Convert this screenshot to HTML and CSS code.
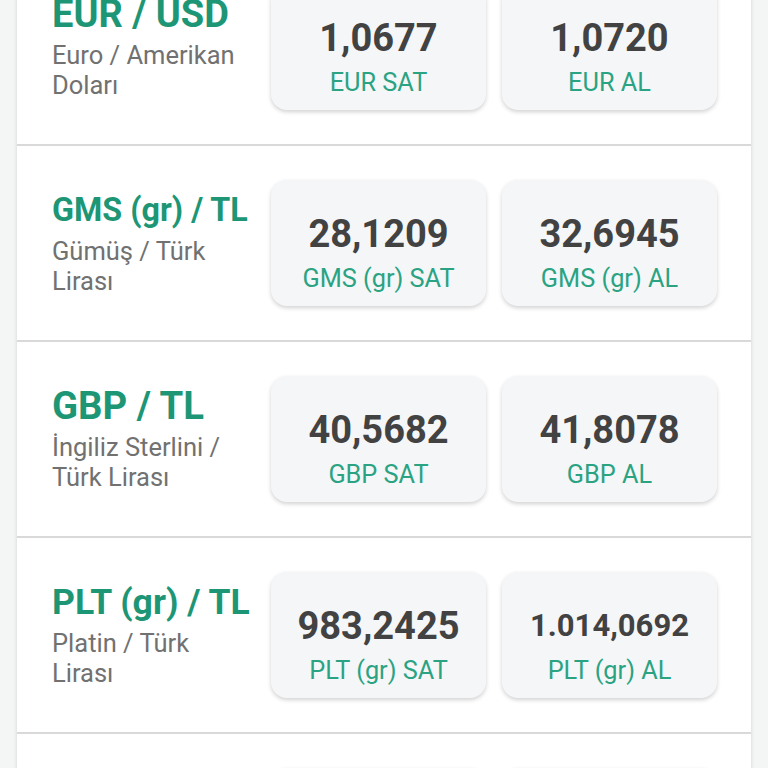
FILE: index.html
```html
<!DOCTYPE html>
<html lang="tr">
<head>
<meta charset="utf-8">
<title>Döviz Kurları</title>
<link rel="stylesheet" href="styles.css">
</head>
<body>
<main class="panel">
  <div class="list">
    <section class="row">
      <div class="info">
        <h2 class="title title--eur">EUR / USD</h2>
        <p class="subtitle">Euro / Amerikan Doları</p>
      </div>
      <div class="card"><span class="value">1,0677</span><span class="label">EUR SAT</span></div>
      <div class="card"><span class="value">1,0720</span><span class="label">EUR AL</span></div>
    </section>
    <section class="row">
      <div class="info">
        <h2 class="title title--gms">GMS (gr) / TL</h2>
        <p class="subtitle">Gümüş / Türk Lirası</p>
      </div>
      <div class="card"><span class="value">28,1209</span><span class="label">GMS (gr) SAT</span></div>
      <div class="card"><span class="value">32,6945</span><span class="label">GMS (gr) AL</span></div>
    </section>
    <section class="row">
      <div class="info">
        <h2 class="title title--gbp">GBP / TL</h2>
        <p class="subtitle">İngiliz Sterlini / Türk Lirası</p>
      </div>
      <div class="card"><span class="value">40,5682</span><span class="label">GBP SAT</span></div>
      <div class="card"><span class="value">41,8078</span><span class="label">GBP AL</span></div>
    </section>
    <section class="row">
      <div class="info">
        <h2 class="title title--plt">PLT (gr) / TL</h2>
        <p class="subtitle">Platin / Türk Lirası</p>
      </div>
      <div class="card"><span class="value">983,2425</span><span class="label">PLT (gr) SAT</span></div>
      <div class="card"><span class="value value--sm">1.014,0692</span><span class="label">PLT (gr) AL</span></div>
    </section>
    <section class="row">
      <div class="info">
        <h2 class="title title--gbp">USD / TL</h2>
        <p class="subtitle">Amerikan Doları / Türk Lirası</p>
      </div>
      <div class="card"><span class="value">32,1540</span><span class="label">USD SAT</span></div>
      <div class="card"><span class="value">32,2830</span><span class="label">USD AL</span></div>
    </section>
  </div>
</main>
</body>
</html>
```

FILE: styles.css
```css
* { box-sizing: border-box; }

html, body {
  margin: 0;
  height: 768px;
  overflow: hidden;
  background: #f3f6f5;
  font-family: Roboto, "Noto Sans", "Liberation Sans", sans-serif;
}

.panel {
  margin: 0 17px;
  width: 734px;
  min-height: 768px;
  background: #ffffff;
  box-shadow: 0 0 4px rgba(0, 0, 0, 0.14);
}

.list {
  margin-top: -50px;
}

.row {
  display: grid;
  grid-template-columns: 203px 215px 215px;
  column-gap: 16px;
  padding: 34px 34px 34px 35px;
  border-bottom: 2px solid #d9d9d9;
}

.info {
  padding-top: 10px;
}

.title {
  margin: 0;
  font-size: 34px;
  line-height: 40px;
  font-weight: 700;
  color: #1d9675;
  white-space: nowrap;
}

.title--eur { font-size: 38px; }
.title--gms { font-size: 32.3px; }
.title--gbp { font-size: 38.3px; }
.title--plt { font-size: 35.6px; }

.subtitle {
  margin: 6px 0 0;
  font-size: 25.5px;
  line-height: 30px;
  color: #717171;
}

.card {
  height: 126px;
  display: flex;
  flex-direction: column;
  align-items: center;
  padding-top: 32px;
  background: #f5f6f8;
  border-radius: 16px;
  box-shadow: 0 2px 4px rgba(0, 0, 0, 0.18);
}

.value {
  font-size: 38px;
  line-height: 44px;
  font-weight: 700;
  color: #424242;
}

.value--sm {
  font-size: 31px;
}

.label {
  margin-top: 9px;
  font-size: 25.3px;
  line-height: 28px;
  color: #2aa383;
  white-space: nowrap;
}
```
